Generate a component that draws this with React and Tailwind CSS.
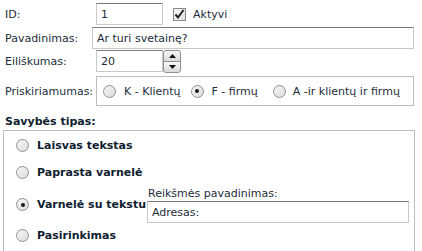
import React from 'react';

const Radio = ({ checked }) => (
  <span className="inline-flex h-[13px] w-[13px] shrink-0 items-center justify-center rounded-full border border-[#8f8f8f] bg-gradient-to-br from-[#f6f6f6] to-[#dcdcdc]">
    {checked && <span className="h-[4px] w-[4px] rounded-full bg-[#1a1a1a]" />}
  </span>
);

const TextInput = ({ value, className = '' }) => (
  <div
    className={`flex h-[22px] items-center border border-[#c9c9c9] border-t-[#7b7b7b] bg-white px-[4px] ${className}`}
  >
    {value}
  </div>
);

const App = () => {
  return (
    <div
      className="relative h-[251px] w-[422px] overflow-hidden bg-white text-[11px] leading-[13px] text-[#1c2c3a]"
      style={{ fontFamily: '"DejaVu Sans", Verdana, sans-serif' }}
    >
      {/* ID */}
      <div className="mt-[3px] flex h-[22px] items-center">
        <span className="w-[96px] pl-[5px]">ID:</span>
        <TextInput value="1" className="w-[67px]" />
        <span className="ml-[10px] flex h-[13px] w-[13px] items-center justify-center border border-[#8a8a8a] bg-gradient-to-br from-[#fafafa] to-[#dedede]">
          <svg width="11" height="11" viewBox="0 0 11 11">
            <path d="M1.5 5.5 L4 8.5 L9.5 1" fill="none" stroke="#222" strokeWidth="2" />
          </svg>
        </span>
        <span className="ml-[7px]">Aktyvi</span>
      </div>

      {/* Pavadinimas */}
      <div className="mt-[2px] flex h-[22px] items-center">
        <span className="w-[92px] pl-[5px]">Pavadinimas:</span>
        <TextInput value="Ar turi svetainę?" className="w-[322px]" />
      </div>

      {/* Eiliškumas */}
      <div className="mt-[1px] flex h-[22px] items-center">
        <span className="w-[96px] pl-[5px]">Eiliškumas:</span>
        <TextInput value="20" className="w-[67px]" />
        <div className="flex h-[23px] w-[18px] flex-col">
          <span className="flex h-[12px] items-center justify-center rounded-t-[3px] border border-[#8e8e8e] bg-gradient-to-b from-[#f7f7f7] to-[#dcdcdc]">
            <svg width="7" height="4" viewBox="0 0 7 4">
              <path d="M0 4 L3.5 0 L7 4 Z" fill="#111" />
            </svg>
          </span>
          <span className="-mt-px flex h-[12px] items-center justify-center rounded-b-[3px] border border-[#8e8e8e] bg-gradient-to-b from-[#f7f7f7] to-[#dcdcdc]">
            <svg width="7" height="4" viewBox="0 0 7 4">
              <path d="M0 0 L3.5 4 L7 0 Z" fill="#111" />
            </svg>
          </span>
        </div>
      </div>

      {/* Priskiriamumas */}
      <div className="mt-[4px] flex items-center">
        <span className="w-[96px] pl-[5px]">Priskiriamumas:</span>
        <div className="flex h-[30px] w-[318px] items-center border border-[#bdbdbd] pl-[6px]">
          <Radio />
          <span className="ml-[8px]">K - Klientų</span>
          <span className="ml-[10px] flex"><Radio checked /></span>
          <span className="ml-[8px]">F - firmų</span>
          <span className="ml-[15px] flex"><Radio /></span>
          <span className="ml-[7px]">A -ir klientų ir firmų</span>
        </div>
      </div>

      <div className="mt-[9px] pl-[5px] font-bold text-[#0f2030]">Savybės tipas:</div>

      {/* Savybės tipas */}
      <div className="ml-[3px] mt-[2px] h-[140px] w-[412px] border border-[#bdbdbd]">
        <div className="flex items-center pl-[12px] pt-[8px]">
          <Radio />
          <span className="ml-[8px] font-bold text-[#0f2030]">Laisvas tekstas</span>
        </div>
        <div className="mt-[14px] flex items-center pl-[12px]">
          <Radio />
          <span className="ml-[8px] font-bold text-[#0f2030]">Paprasta varnelė</span>
        </div>
        <div className="mt-[7px] flex items-center pl-[12px]">
          <Radio checked />
          <span className="ml-[8px] w-[110px] font-bold text-[#0f2030]">Varnelė su tekstu</span>
          <div className="flex flex-col">
            <span className="pl-[1px] leading-[15px]">Reikšmės pavadinimas:</span>
            <TextInput value="Adresas:" className="h-[21px] w-[262px]" />
          </div>
        </div>
        <div className="mt-[6px] flex items-center pl-[12px]">
          <Radio />
          <span className="ml-[8px] font-bold text-[#0f2030]">Pasirinkimas</span>
        </div>
      </div>
    </div>
  );
};

export default App;
